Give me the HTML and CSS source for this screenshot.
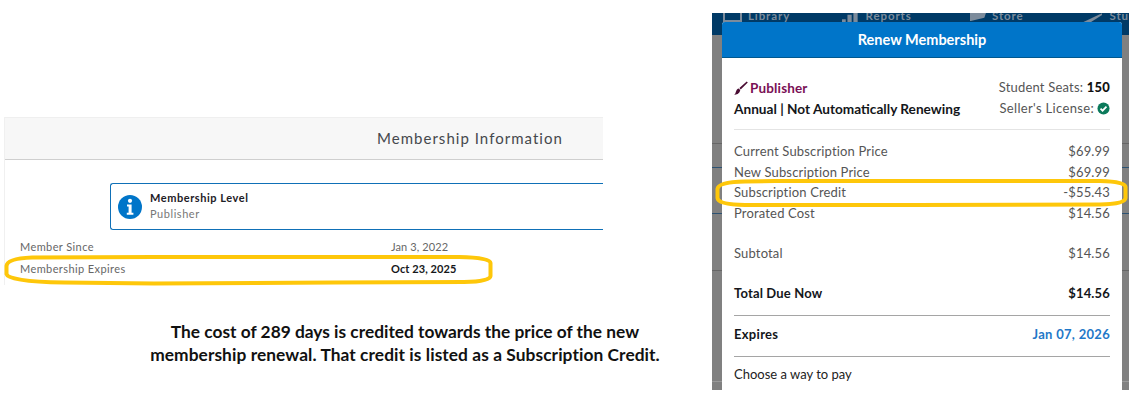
FILE: index.html
```html
<!DOCTYPE html>
<html lang="en">
<head>
<meta charset="utf-8">
<title>Membership renewal</title>
<link rel="stylesheet" href="styles.css">
</head>
<body>
<main class="stage">
  <section class="info-panel">
    <header class="info-head"><h2>Membership Information</h2></header>
    <div class="level-box">
      <svg class="info-icon" viewBox="0 0 24 24" width="24" height="24" aria-hidden="true">
        <circle cx="12" cy="12" r="12" fill="#0075c9"/>
        <circle cx="12" cy="5.8" r="2.1" fill="#fff"/>
        <path d="M9 9.6h4.6v8.2H15.400v1.900H8.800v-1.900h1.800v-6.300H9z" fill="#fff"/>
      </svg>
      <div class="level-text">
        <strong>Membership Level</strong>
        <span>Publisher</span>
      </div>
    </div>
    <dl class="info-rows">
      <div class="info-row"><dt>Member Since</dt><dd>Jan 3, 2022</dd></div>
      <div class="info-row"><dt>Membership Expires</dt><dd class="strong">Oct 23, 2025</dd></div>
    </dl>
  </section>

  <svg class="mark mark-left" viewBox="0 0 490 32" width="490" height="32" aria-hidden="true">
    <path d="M2.500 12Q3 4.500 28 3.500L150 3H455Q486 3.500 486.500 9V22Q486 27.500 460 28L330 28.500 150 29.500 60 28.500Q4 27.500 2.500 20Z"/>
  </svg>

  <p class="caption">The cost of 289 days is credited towards the price of the new<br><span class="caption-second">membership renewal. That credit is listed as a Subscription Credit.</span></p>

  <section class="renew-shot">
    <div class="backnav">
      <span class="nav-item nav-library"><i class="nav-glyph glyph-box"></i>Library</span>
      <span class="nav-item nav-reports"><i class="nav-glyph glyph-bars"></i>Reports</span>
      <span class="nav-item nav-store"><i class="nav-glyph glyph-flag"></i>Store</span>
      <span class="nav-item nav-stu"><i class="nav-glyph glyph-brush"></i>Stu</span>
    </div>
    <i class="backline line-a"></i>
    <i class="backline line-b"></i>
    <i class="backline line-c"></i>
    <i class="backline line-d"></i>
    <i class="backline line-e"></i>
    <div class="modal">
      <header class="modal-head">Renew Membership</header>
      <div class="modal-body">
        <div class="plan">
          <div class="plan-left">
            <div class="plan-name">
              <svg viewBox="0 0 14 14" width="14" height="14" aria-hidden="true">
                <path d="M12.700.4 13.800 1.500 6.700 8.400 5.400 7.100zM4.700 7.600 6.200 9.100C6 12 3 14.200.2 13.700 1.600 12.900 1.500 11.400 2.200 9.900 2.700 8.700 3.600 7.900 4.700 7.600z" fill="#4a0d33"/>
              </svg>
              Publisher
            </div>
            <div class="plan-term">Annual | Not Automatically Renewing</div>
          </div>
          <div class="plan-right">
            <div class="seats">Student Seats: <b>150</b></div>
            <div class="license">Seller's License:
              <svg viewBox="0 0 14 14" width="13" height="13" aria-hidden="true">
                <circle cx="7" cy="7" r="6.500" fill="#0b7a5b"/>
                <path d="M3.800 7.200 6 9.400 10.200 5" fill="none" stroke="#fff" stroke-width="1.900"/>
              </svg>
            </div>
          </div>
        </div>
        <div class="rows prices">
          <div class="row"><span>Current Subscription Price</span><span>$69.99</span></div>
          <div class="row"><span>New Subscription Price</span><span>$69.99</span></div>
          <div class="row"><span>Subscription Credit</span><span>-$55.43</span></div>
          <div class="row"><span>Prorated Cost</span><span>$14.56</span></div>
        </div>
        <div class="row subtotal"><span>Subtotal</span><span>$14.56</span></div>
        <div class="row total"><span>Total Due Now</span><span>$14.56</span></div>
        <div class="row expires"><span>Expires</span><span class="date">Jan 07, 2026</span></div>
        <div class="pay">Choose a way to pay</div>
      </div>
    </div>
  </section>

  <svg class="mark mark-right" viewBox="0 0 413 30" width="413" height="30" aria-hidden="true">
    <path d="M2.500 11Q3 4 30 3.500L60 3H385Q410 3.500 410.500 9V20Q410 26 385 26.500L200 27H30Q3 26.500 2.500 20Z"/>
  </svg>
</main>
</body>
</html>
```

FILE: styles.css
```css
* { box-sizing: border-box; }

html, body {
  margin: 0;
  padding: 0;
  background: #fff;
}

.stage {
  position: relative;
  width: 1134px;
  height: 414px;
  overflow: hidden;
  font-family: "Lato", "Liberation Sans", sans-serif;
}

/* Left screenshot */
.info-panel {
  position: absolute;
  left: 4px;
  top: 117px;
  width: 599px;
  height: 168px;
  border-left: 1px solid #f0f0f0;
  color: #555;
}

.info-head {
  height: 43px;
  background: #f7f7f7;
  border-top: 1px solid #efefef;
  border-bottom: 1px solid #cfcfcf;
  padding: 11px 0 0 372px;
}

.info-head h2 {
  margin: 0;
  font-size: 15px;
  line-height: 18px;
  font-weight: 400;
  letter-spacing: 1.03px;
  color: #45484d;
  white-space: nowrap;
}

.level-box {
  display: flex;
  align-items: center;
  gap: 8px;
  height: 47px;
  margin: 23px 0 0 105px;
  padding-left: 7px;
  border: 1px solid #0f70b7;
  border-right: 0;
  border-radius: 3px 0 0 3px;
}

.level-text {
  display: flex;
  flex-direction: column;
  gap: 3px;
  padding-bottom: 2px;
  font-size: 11px;
  line-height: 13px;
  letter-spacing: .55px;
}

.level-text strong {
  color: #1d2026;
  font-weight: 700;
}

.level-text span { color: #777; }

.info-rows {
  margin: 5px 0 0;
  font-size: 11px;
}

.info-row {
  display: flex;
  height: 22px;
  align-items: center;
  padding-left: 15px;
}

.info-row dt {
  width: 371px;
  color: #666;
  letter-spacing: .4px;
}

.info-row dd {
  margin: 0;
  color: #666;
  letter-spacing: .1px;
}

.info-row dd.strong {
  color: #15171a;
  font-weight: 700;
  letter-spacing: .08px;
}

/* Hand drawn highlights */
.mark {
  position: absolute;
  fill: none;
  stroke: #fec70a;
  stroke-width: 4;
}

.mark-left { left: 4px; top: 254px; }
.mark-right { left: 715px; top: 178px; }

/* Caption */
.caption {
  position: absolute;
  left: 105px;
  top: 320px;
  width: 600px;
  margin: 0;
  text-align: center;
  font-size: 17.330px;
  line-height: 23px;
  font-weight: 700;
  color: #111;
}

.caption-second { letter-spacing: .075px; }

/* Right screenshot */
.renew-shot {
  position: absolute;
  left: 712px;
  top: 13px;
  width: 417px;
  height: 377px;
  background: #808080;
}

.backnav {
  display: flex;
  height: 22px;
  background: #003a66;
  color: #7c8b9b;
  font-size: 11.500px;
  font-weight: 700;
  letter-spacing: .9px;
  line-height: 6px;
  overflow: hidden;
}

.nav-item {
  display: flex;
  gap: 7px;
  white-space: nowrap;
}

.nav-library { margin-left: 11px; width: 119px; gap: 6px; }
.nav-reports { width: 129px; }
.nav-store { width: 114px; gap: 6px; }

.nav-glyph {
  display: block;
  width: 19px;
  height: 9px;
  background: #7c8b9b;
}

.glyph-box { height: 9px; background: none; border: 2px solid #7c8b9b; border-top: 0; }
.glyph-bars { width: 17px; clip-path: polygon(0 100%, 0 70%, 25% 70%, 25% 100%, 35% 100%, 35% 20%, 60% 20%, 60% 100%, 70% 100%, 70% 0, 95% 0, 95% 100%); }
.glyph-flag { width: 16px; height: 8px; clip-path: polygon(0 0, 100% 0, 90% 60%, 5% 100%, 0 100%); }
.glyph-brush { clip-path: polygon(100% 0, 100% 20%, 40% 100%, 0 100%); }

.backline {
  position: absolute;
  left: 0;
  width: 100%;
  height: 1px;
  background: #5a6c7c;
}

.line-a { top: 130px; background: #666; }
.line-b { top: 154px; background: #2c5272; }
.line-c { top: 200px; background: #2c5272; }
.line-d { top: 257px; background: #666; }
.line-e { top: 368px; background: #999; }

.modal {
  position: absolute;
  left: 10px;
  top: 9px;
  width: 400px;
  height: 368px;
  background: #fff;
  border-radius: 3px 3px 0 0;
}

.modal-head {
  height: 36px;
  background: #0075c9;
  border-bottom: 1px solid #00588f;
  border-radius: 3px 3px 0 0;
  color: #fff;
  text-align: center;
  font-size: 14.500px;
  font-weight: 700;
  line-height: 35px;
}

.modal-body {
  padding: 0 12px;
  font-size: 13px;
  color: #555;
}

.plan {
  display: flex;
  justify-content: space-between;
  height: 72px;
  padding-top: 19px;
  border-bottom: 1px solid #e4e4e4;
}

.plan-name {
  display: flex;
  align-items: center;
  gap: 2px;
  height: 21px;
  color: #7a0f55;
  font-size: 13.500px;
  font-weight: 700;
  letter-spacing: .15px;
}

.plan-term {
  margin-top: 1px;
  color: #14161a;
  font-size: 13.650px;
  font-weight: 700;
  line-height: 21px;
  white-space: nowrap;
}

.plan-right {
  display: flex;
  flex-direction: column;
  align-items: flex-end;
  line-height: 21px;
}

.seats { letter-spacing: .2px; }

.plan-right b { color: #111; font-weight: 900; }

.license {
  display: flex;
  align-items: center;
  gap: 3px;
  letter-spacing: .33px;
}

.row {
  display: flex;
  justify-content: space-between;
  align-items: center;
  letter-spacing: .16px;
  white-space: nowrap;
}

.prices { padding-top: 11px; }
.prices .row { height: 20.500px; }

.subtotal { height: 20px; margin-top: 20px; }

.total {
  height: 42px;
  margin-top: 11px;
  border-bottom: 1px solid #a5a5a5;
  padding-bottom: 4px;
  color: #14161a;
  font-weight: 700;
}

.expires {
  height: 41px;
  border-bottom: 1px solid #a5a5a5;
  padding-bottom: 4px;
  color: #14161a;
  font-weight: 700;
  letter-spacing: .3px;
}

.date { color: #1f78c8; }

.pay {
  margin-top: 8px;
  color: #222;
  line-height: 18px;
}
```
